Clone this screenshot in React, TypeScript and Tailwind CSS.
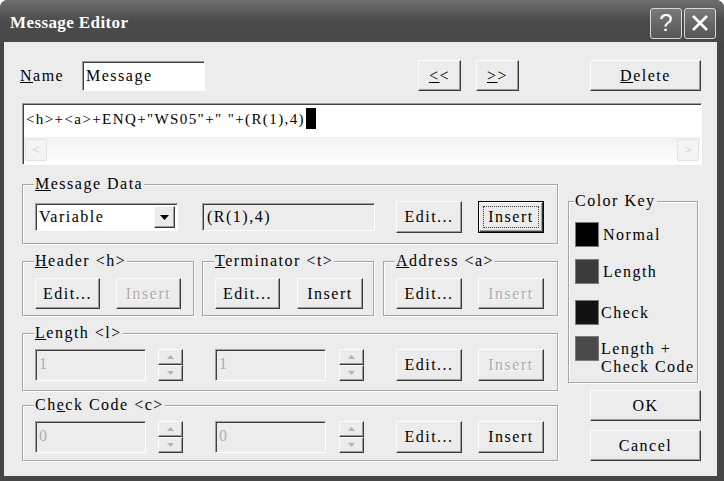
import React from "react";

// ─── Shared looks ──────────────────────────────────────────────────────────────

const face = "[font-family:'Liberation_Serif','Noto_Sans_CJK_SC',serif] tracking-[1.5px]";
const raised =
  "bg-[#ececec] border border-t-[#fbfbfb] border-l-[#fbfbfb] border-r-[#3a3a3a] border-b-[#3a3a3a] shadow-[inset_-1px_-1px_0_#9c9c9c]";
const sunken =
  "border border-t-[#a0a0a0] border-l-[#a0a0a0] border-r-white border-b-white shadow-[inset_1px_1px_0_#3e3e3e]";

interface BtnProps {
  children: React.ReactNode;
  className?: string;
  disabled?: boolean;
  focus?: boolean;
}

function Btn({ children, className = "", disabled, focus }: BtnProps) {
  if (focus) {
    return (
      <div className={`border border-black ${className}`}>
        <div className={`${raised} w-full h-full flex items-center justify-center p-[3px]`}>
          <div className="w-full h-full flex items-center justify-center border border-dotted border-[#333]">
            {children}
          </div>
        </div>
      </div>
    );
  }
  return (
    <div
      className={`${raised} flex items-center justify-center ${
        disabled ? "text-[#acacac] [text-shadow:1px_1px_0_#fff]" : "text-black"
      } ${className}`}
    >
      {children}
    </div>
  );
}

interface GroupProps {
  label: React.ReactNode;
  className?: string;
  children: React.ReactNode;
}

function Group({ label, className = "", children }: GroupProps) {
  return (
    <fieldset
      className={`border border-[#a4a4a4] shadow-[inset_1px_1px_0_#fff,1px_1px_0_#fff] ${className}`}
    >
      <legend className="ml-[-1px] px-[1px] h-[16px] leading-[16px] bg-[#ececec] overflow-visible">{label}</legend>
      {children}
    </fieldset>
  );
}

function Spinner() {
  return (
    <div className="flex flex-col w-[25px] h-[32px]">
      <div className={`${raised} flex-1 flex items-center justify-center`}>
        <svg width="7" height="4" viewBox="0 0 7 4">
          <path d="M0 4 L3.5 0 L7 4 Z" fill="#b4b4b4" />
        </svg>
      </div>
      <div className={`${raised} flex-1 flex items-center justify-center`}>
        <svg width="7" height="4" viewBox="0 0 7 4">
          <path d="M0 0 L3.5 4 L7 0 Z" fill="#b4b4b4" />
        </svg>
      </div>
    </div>
  );
}

function DisabledInput({ value }: { value: string }) {
  return (
    <div className={`${sunken} w-[111px] h-[32px] bg-[#ececec] text-[#b0b0b0] pl-[3px] pt-[5px] leading-[18px]`}>
      {value}
    </div>
  );
}

function Swatch({ color }: { color: string }) {
  return <div className={`w-[24px] h-[25px] border border-[#7a7a7a] shrink-0 ${color}`} />;
}

// ─── Dialog ────────────────────────────────────────────────────────────────────

export default function App() {
  return (
    <div className={`w-[724px] h-[481px] bg-white ${face} text-[16px] text-black`}>
      <div className="w-full h-full flex flex-col bg-[#454545] rounded-t-[8px] overflow-hidden">
        {/* title bar */}
        <div className="h-[42px] flex items-center pl-[10px] pr-[8px] pt-[4px] bg-gradient-to-b from-[#6e6e6e] via-[#4b4b4b] to-[#474747]">
          <span className="flex-1 text-white font-bold text-[17px] tracking-[0.4px]">
            Message Editor
          </span>
          <div className="flex gap-[2px] tracking-normal">
            <div className="w-[32px] h-[31px] rounded-[3px] border border-[#d8d8d8] bg-gradient-to-b from-[#7a7a7a] to-[#555] flex items-center justify-center text-white text-[24px] [font-family:'Liberation_Sans',sans-serif]">
              ?
            </div>
            <div className="w-[32px] h-[31px] rounded-[3px] border border-[#d8d8d8] bg-gradient-to-b from-[#7a7a7a] to-[#555] flex items-center justify-center">
              <svg width="18" height="18" viewBox="0 0 18 18">
                <path d="M2 2 L16 16 M16 2 L2 16" stroke="#fff" strokeWidth="2.6" />
              </svg>
            </div>
          </div>
        </div>

        {/* body */}
        <div className="flex-1 ml-[4px] mr-[7px] mb-[5px] bg-[#ececec] pl-[18px] pr-[15px] pt-[18px]">
          {/* name row */}
          <div className="flex items-center h-[31px]">
            <span className="w-[62px] ml-[-2px]">
              <u>N</u>ame
            </span>
            <div className={`${sunken} w-[123px] h-[30px] bg-white pl-[3px] flex items-center`}>Message</div>
            <div className="flex-1" />
            <Btn className="w-[43px] h-[31px]">
              <u>&lt;</u>&lt;
            </Btn>
            <Btn className="w-[43px] h-[31px] ml-[15px]">
              <u>&gt;</u>&gt;
            </Btn>
            <Btn className="w-[111px] h-[31px] ml-[71px] mr-[1px]">
              <u>D</u>elete
            </Btn>
          </div>

          {/* message text */}
          <div className={`${sunken} mt-[12px] h-[62px] bg-white flex flex-col justify-between pb-[2px]`}>
            <div className="pl-[3px] pt-[4px] leading-[20px] flex items-center whitespace-pre text-[15px] tracking-[1.4px]">
              {'<h>+<a>+ENQ+"WS05"+" "+(R(1),4)'}
              <span className="inline-block w-[10px] h-[21px] bg-black ml-[1px]" />
            </div>
            <div className="h-[25px] mx-[1px] flex items-center justify-between px-[1px] bg-gradient-to-b from-[#f3f3f3] to-[#fdfdfd] border-t border-[#f0f0f0]">
              <div className="w-[22px] h-[22px] rounded-[2px] border border-[#e2e2e2] bg-[#f4f4f4] flex items-center justify-center text-[#c4c4c4] text-[13px] tracking-normal">
                &lt;
              </div>
              <div className="w-[22px] h-[22px] rounded-[2px] border border-[#e2e2e2] bg-[#f4f4f4] flex items-center justify-center text-[#c4c4c4] text-[13px] tracking-normal">
                &gt;
              </div>
            </div>
          </div>

          {/* lower area */}
          <div className="flex mt-[11px]">
            {/* left column */}
            <div className="w-[536px] flex flex-col">
              <Group label={<><u>M</u>essage Data</>} className="pl-[12px] pt-[9px] pb-[10px]">
                <div className="flex items-center h-[32px]">
                  <div className={`${sunken} w-[143px] h-[28px] bg-white flex items-center pl-[3px] pr-[2px]`}>
                    <span className="flex-1">Variable</span>
                    <div className={`${raised} w-[21px] h-[22px] flex items-center justify-center`}>
                      <svg width="9" height="5" viewBox="0 0 9 5">
                        <path d="M0 0 L4.5 5 L9 0 Z" fill="#000" />
                      </svg>
                    </div>
                  </div>
                  <div className={`${sunken} w-[173px] h-[28px] bg-[#ececec] ml-[24px] flex items-center pl-[4px]`}>
                    (R(1),4)
                  </div>
                  <Btn className="w-[66px] h-[32px] ml-[21px]">Edit...</Btn>
                  <Btn focus className="w-[66px] h-[32px] ml-[16px]">Insert</Btn>
                </div>
              </Group>

              <div className="flex mt-[9px]">
                <Group label={<><u>H</u>eader &lt;h&gt;</>} className="w-[172px] pl-[12px] pt-[9px] pb-[6px]">
                  <div className="flex gap-[16px]">
                    <Btn className="w-[65px] h-[31px]">Edit...</Btn>
                    <Btn disabled className="w-[65px] h-[31px]">Insert</Btn>
                  </div>
                </Group>
                <Group label={<><u>T</u>erminator &lt;t&gt;</>} className="w-[172px] ml-[8px] pl-[12px] pt-[9px] pb-[6px]">
                  <div className="flex gap-[17px]">
                    <Btn className="w-[65px] h-[31px]">Edit...</Btn>
                    <Btn className="w-[66px] h-[31px]">Insert</Btn>
                  </div>
                </Group>
                <Group label={<><u>A</u>ddress &lt;a&gt;</>} className="w-[175px] ml-[9px] pl-[12px] pt-[9px] pb-[6px]">
                  <div className="flex gap-[16px]">
                    <Btn className="w-[66px] h-[31px]">Edit...</Btn>
                    <Btn disabled className="w-[66px] h-[31px]">Insert</Btn>
                  </div>
                </Group>
              </div>

              <Group label={<><u>L</u>ength &lt;l&gt;</>} className="mt-[9px] pl-[12px] pt-[8px] pb-[9px]">
                <div className="flex items-center h-[32px]">
                  <DisabledInput value="1" />
                  <div className="ml-[12px]"><Spinner /></div>
                  <div className="ml-[32px]"><DisabledInput value="1" /></div>
                  <div className="ml-[13px]"><Spinner /></div>
                  <Btn className="w-[66px] h-[32px] ml-[32px]">Edit...</Btn>
                  <Btn disabled className="w-[66px] h-[32px] ml-[16px]">Insert</Btn>
                </div>
              </Group>

              <Group label={<>Ch<u>e</u>ck Code &lt;c&gt;</>} className="mt-[6px] pl-[12px] pt-[8px] pb-[7px]">
                <div className="flex items-center h-[32px]">
                  <DisabledInput value="0" />
                  <div className="ml-[12px]"><Spinner /></div>
                  <div className="ml-[32px]"><DisabledInput value="0" /></div>
                  <div className="ml-[13px]"><Spinner /></div>
                  <Btn className="w-[66px] h-[32px] ml-[32px]">Edit...</Btn>
                  <Btn className="w-[66px] h-[32px] ml-[16px]">Insert</Btn>
                </div>
              </Group>
            </div>

            {/* right column */}
            <div className="w-[134px] ml-[10px] pt-[17px] flex flex-col">
              <Group label="Color Key" className="w-[130px] pl-[6px] pt-[13px] pb-[6px]">
                <div className="flex items-center gap-[4px]">
                  <Swatch color="bg-black" />
                  <span>Normal</span>
                </div>
                <div className="flex items-center gap-[4px] mt-[12px]">
                  <Swatch color="bg-[#3b3b3b]" />
                  <span>Length</span>
                </div>
                <div className="flex items-center gap-[2px] mt-[16px]">
                  <Swatch color="bg-[#121212]" />
                  <span>Check</span>
                </div>
                <div className="flex items-start gap-[2px] mt-[11px]">
                  <Swatch color="bg-[#4a4a4a]" />
                  <span className="leading-[18px] pt-[4px]">
                    Length +<br />Check Code
                  </span>
                </div>
              </Group>
              <Btn className="w-[111px] h-[31px] ml-[22px] mt-[7px]">OK</Btn>
              <Btn className="w-[111px] h-[31px] ml-[22px] mt-[9px]">Cancel</Btn>
            </div>
          </div>
        </div>
      </div>
    </div>
  );
}
